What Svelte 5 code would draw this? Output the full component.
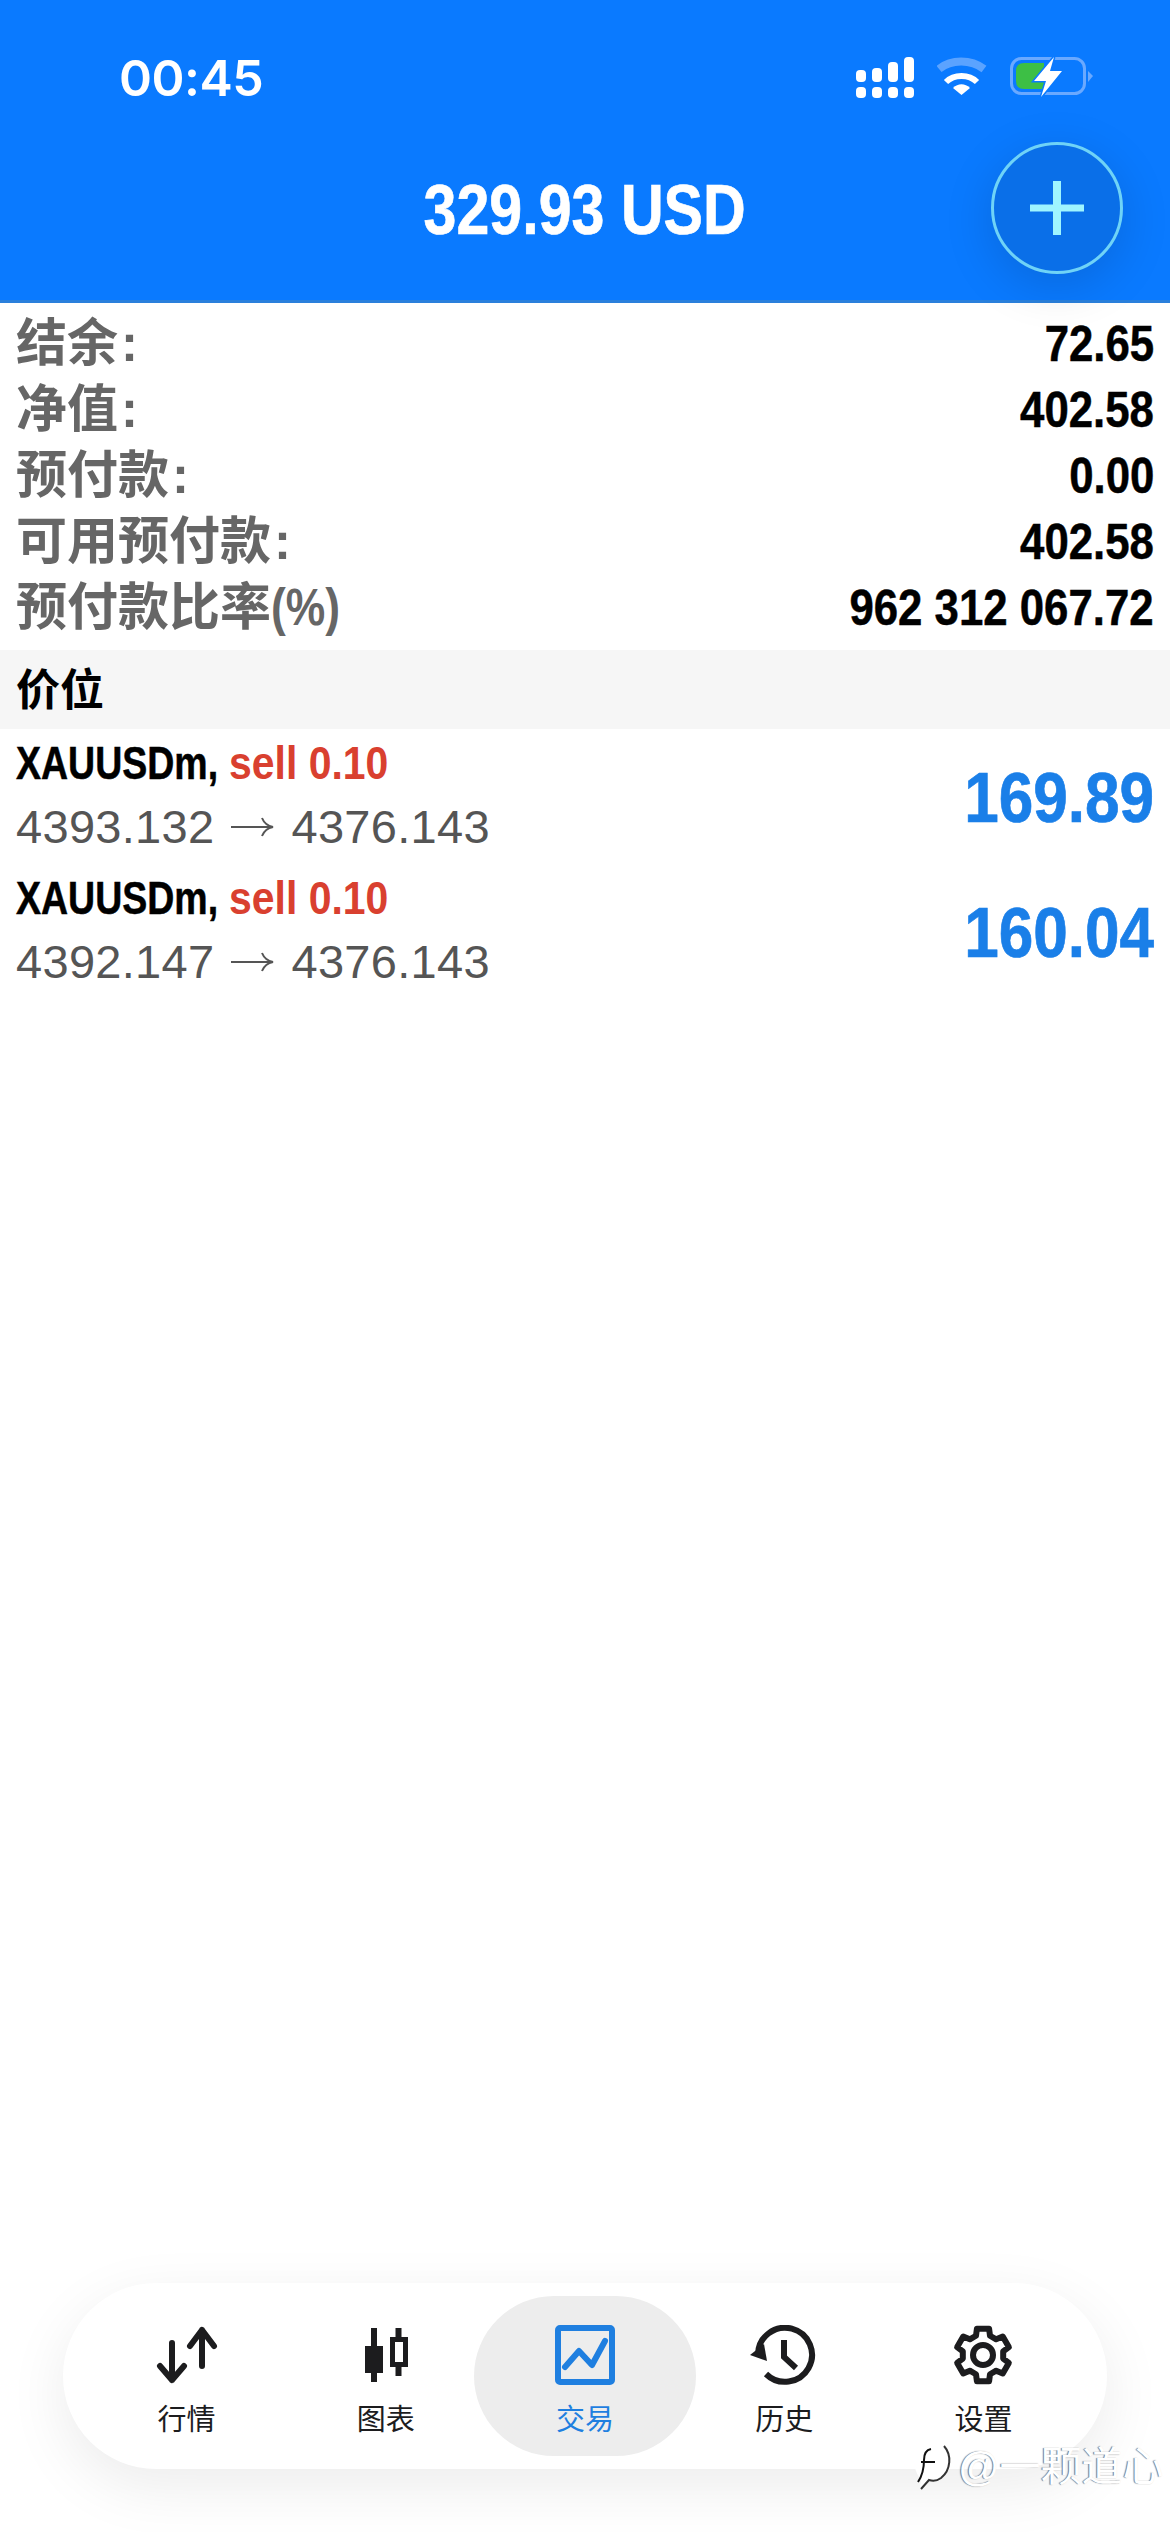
<script>
  const summary = [
    { label: '结余', value: '72.65', colon: true },
    { label: '净值', value: '402.58', colon: true },
    { label: '预付款', value: '0.00', colon: true },
    { label: '可用预付款', value: '402.58', colon: true },
    { label: '预付款比率', unit: '(%)', value: '962 312 067.72' }
  ];

  const positions = [
    { symbol: 'XAUUSDm,', side: 'sell 0.10', open: '4393.132', close: '4376.143', profit: '169.89' },
    { symbol: 'XAUUSDm,', side: 'sell 0.10', open: '4392.147', close: '4376.143', profit: '160.04' }
  ];

  const tabs = [
    { id: 'quotes', label: '行情' },
    { id: 'charts', label: '图表' },
    { id: 'trade', label: '交易', active: true },
    { id: 'history', label: '历史' },
    { id: 'settings', label: '设置' }
  ];

  // six tooth gear outline, centred on 30,30
  function gearPath() {
    const pts = [];
    const at = (deg, r) => {
      const a = (deg * Math.PI) / 180;
      return `${(30 + r * Math.cos(a)).toFixed(2)} ${(30 + r * Math.sin(a)).toFixed(2)}`;
    };
    for (let i = 0; i < 6; i++) {
      const a = i * 60 - 90;
      pts.push(at(a - 20, 20.5), at(a - 13, 27), at(a + 13, 27), at(a + 20, 20.5));
    }
    return 'M' + pts.join('L') + 'Z';
  }
  const gear = gearPath();
</script>

<div class="page">
  <header class="top">
    <div class="status">
      <span class="time">00:45</span>
      <div class="status-icons">
        <svg class="signal" width="58" height="42" viewBox="0 0 58 42" fill="#fff">
          <rect x="0" y="13" width="10" height="12" rx="4" />
          <rect x="16" y="11" width="10" height="14" rx="4" />
          <rect x="32" y="5" width="10" height="20" rx="4" />
          <rect x="48" y="0" width="10" height="25" rx="4" />
          <rect x="0" y="30" width="10" height="11" rx="4" />
          <rect x="16" y="30" width="10" height="11" rx="4" />
          <rect x="32" y="30" width="10" height="11" rx="4" />
          <rect x="48" y="30" width="10" height="11" rx="4" />
        </svg>
        <svg class="wifi" width="50" height="38" viewBox="0 0 50 38" fill="none">
          <path d="M2 12C14 2 34 2 47 12" stroke="#5ba3ff" stroke-width="8" />
          <path d="M9 25C17 17 32 17 40 25" stroke="#fff" stroke-width="6" />
          <path d="M16 31L24.500 38L33 31C28 26 21 26 16 31Z" fill="#fff" />
        </svg>
        <svg class="battery" width="84" height="40" viewBox="0 0 84 40">
          <rect x="1.500" y="1.500" width="73" height="35" rx="10" fill="none" stroke="#6aa9ff" stroke-width="3" />
          <path d="M6 14Q6 6 14 6H34V32H14Q6 32 6 24Z" fill="#3dbf45" />
          <path d="M44 0L24 24H36L31 40L52 14H40Z" fill="#fff" stroke="#0a7aff" stroke-width="3" paint-order="stroke" />
          <path d="M78 14L83 19L78 25Z" fill="#6aa9ff" />
        </svg>
      </div>
    </div>
    <h1 class="balance"><span>329.93 USD</span></h1>
    <button class="add" aria-label="新建订单">
      <svg width="54" height="54" viewBox="0 0 54 54" fill="#9ff5ff">
        <rect x="23" y="0" width="8" height="54" />
        <rect x="0" y="23.500" width="54" height="7" />
      </svg>
    </button>
  </header>

  <section class="summary">
    {#each summary as row}
      <div class="summary-row">
        <span class="label">{row.label}{#if row.colon}<i class="colon">:</i>{/if}{#if row.unit}<i class="unit">{row.unit}</i>{/if}</span>
        <span class="value narrow-r">{row.value}</span>
      </div>
    {/each}
  </section>

  <div class="section-bar">价位</div>

  <section class="positions">
    {#each positions as p}
      <div class="position">
        <div class="position-info">
          <div class="line-top">
            <span class="symbol">{p.symbol}</span>
            <span class="side">{p.side}</span>
          </div>
          <div class="line-price">
            <span>{p.open}</span>
            <svg width="43" height="24" viewBox="0 0 43 24" fill="none" stroke="#555" stroke-width="2">
              <path d="M0 12H41M31 3C33 8 37 11 42 12C37 13 33 16 31 21" />
            </svg>
            <span>{p.close}</span>
          </div>
        </div>
        <span class="profit narrow-r">{p.profit}</span>
      </div>
    {/each}
  </section>

  <div class="nav-wrap">
    <nav class="nav">
      {#each tabs as tab}
        <div class="tab" class:active={tab.active}>
          {#if tab.id === 'quotes'}
            <svg width="72" height="60" viewBox="0 0 72 60" fill="none" stroke="#1c1c1e" stroke-width="6" stroke-linecap="round" stroke-linejoin="round">
              <path d="M21 18V55M9 41L21 55L33 41" />
              <path d="M51 5V41M39 21L51 5L63 21" />
            </svg>
          {:else if tab.id === 'charts'}
            <svg width="60" height="60" viewBox="0 0 60 60" fill="#1c1c1e">
              <rect x="15" y="3" width="6" height="54" />
              <rect x="9" y="21" width="18" height="27" />
              <rect x="39.500" y="3" width="6" height="48" />
              <rect x="36.500" y="14.500" width="13" height="25" fill="#fff" stroke="#1c1c1e" stroke-width="5" />
            </svg>
          {:else if tab.id === 'trade'}
            <svg width="60" height="60" viewBox="0 0 60 60" fill="none" stroke="#1f7fe0" stroke-width="6" stroke-linecap="round" stroke-linejoin="round">
              <rect x="3" y="3" width="54" height="54" rx="2" />
              <path d="M10 42L24 26L37 40L50 16" />
            </svg>
          {:else if tab.id === 'history'}
            <svg width="72" height="60" viewBox="0 0 72 60" fill="none" stroke="#1c1c1e" stroke-width="6">
              <path d="M10 30A27 27 0 1 1 18 49" />
              <path d="M2 30L16 19L19 36Z" fill="#1c1c1e" stroke="none" />
              <path d="M36 15V32L48 43" />
            </svg>
          {:else}
            <svg width="60" height="60" viewBox="0 0 60 60" fill="none" stroke="#1c1c1e" stroke-width="6" stroke-linejoin="round">
              <path d={gear} />
              <circle cx="30" cy="30" r="10" />
            </svg>
          {/if}
          <span class="tab-label">{tab.label}</span>
        </div>
      {/each}
    </nav>
  </div>

  <div class="watermark">
    <svg width="44" height="50" viewBox="0 0 44 50" fill="#fff">
      <path d="M6 26C2 10 16 1 28 2C40 3 44 14 40 26C37 36 28 39 20 38L11 47L12 37C9 34 7 30 6 26Z" />
      <path d="M12 20H26M22 7C17 8 15 12 15 18C15 26 13 34 9 40" fill="none" stroke="#111" stroke-width="2" />
      <path d="M35 4C43 13 42 28 32 36C28 39 23 39 20 38L12 47" fill="none" stroke="#333" stroke-width="2" />
    </svg>
    <span>@一颗道心</span>
  </div>
</div>

<style>
  :global(body) {
    margin: 0;
    background: #fff;
  }

  .page {
    position: relative;
    display: flex;
    flex-direction: column;
    width: 1170px;
    height: 2532px;
    overflow: hidden;
    background: #fff;
    font-family: "Liberation Sans", "Noto Sans CJK SC", sans-serif;
  }

  .top {
    position: relative;
    height: 300px;
    flex: none;
    background: #0a7aff;
    border-bottom: 3px solid #2a80dc;
    color: #fff;
  }

  .status {
    display: flex;
    align-items: center;
    justify-content: space-between;
    padding: 55px 76px 0 119px;
  }

  .time {
    font-family: Inter, sans-serif;
    font-size: 50px;
    font-weight: 600;
    letter-spacing: -0.5px;
    line-height: 46px;
  }

  .status-icons {
    display: flex;
    align-items: flex-start;
    gap: 23px;
  }

  .balance {
    margin: 69px 0 0;
    text-align: center;
    font-size: 70px;
    font-weight: 700;
    line-height: 80px;
    -webkit-text-stroke: 0.7px #fff;
  }

  .balance span {
    display: inline-block;
    transform: scaleX(0.845);
  }

  .add {
    position: absolute;
    left: 991px;
    top: 142px;
    display: flex;
    align-items: center;
    justify-content: center;
    width: 132px;
    height: 132px;
    padding: 0;
    box-sizing: border-box;
    border: 3px solid #6fd3f7;
    border-radius: 50%;
    background: #0a6fe8;
    box-shadow: 0 12px 50px rgba(0, 0, 0, 0.14);
  }

  .summary {
    padding: 8px 16px 9px;
  }

  .summary-row {
    display: flex;
    align-items: center;
    justify-content: space-between;
    height: 66px;
  }

  .label {
    color: #666;
    font-size: 51px;
    font-weight: 700;
    line-height: 66px;
  }

  .colon {
    margin-left: 3px;
    font-style: normal;
  }

  .unit {
    display: inline-block;
    font-style: normal;
    transform: scaleX(0.87);
    transform-origin: left center;
  }

  .value {
    color: #000;
    font-size: 50px;
    font-weight: 700;
    line-height: 66px;
    -webkit-text-stroke: 0.5px #000;
  }

  .narrow-r {
    display: inline-block;
    white-space: nowrap;
    transform: scaleX(0.875);
    transform-origin: right center;
  }

  .section-bar {
    height: 79px;
    flex: none;
    padding-left: 16px;
    background: #f6f6f6;
    color: #000;
    font-size: 44px;
    font-weight: 700;
    line-height: 81px;
  }

  .position {
    display: flex;
    align-items: center;
    justify-content: space-between;
    height: 135px;
    padding: 0 16px;
  }

  .position-info {
    margin-top: -4px;
  }

  .line-top {
    display: flex;
    height: 64px;
    align-items: center;
    font-size: 46px;
    font-weight: 700;
    white-space: nowrap;
  }

  .symbol {
    display: inline-block;
    width: 213px;
    color: #000;
    -webkit-text-stroke: 0.5px #000;
    transform: scaleX(0.815);
    transform-origin: left center;
  }

  .side {
    display: inline-block;
    color: #d9402f;
    transform: scaleX(0.89);
    transform-origin: left center;
  }

  .line-price {
    display: flex;
    align-items: center;
    gap: 17px;
    height: 64px;
    color: #555;
    font-size: 47px;
    letter-spacing: 0.3px;
    line-height: 64px;
    white-space: nowrap;
  }

  .profit {
    margin-top: 2px;
    color: #1a7fe8;
    font-size: 71px;
    font-weight: 700;
    -webkit-text-stroke: 0.7px #1a7fe8;
  }

  .nav-wrap {
    margin-top: auto;
    padding: 0 63px 63px;
  }

  .nav {
    display: grid;
    grid-template-columns: repeat(5, 1fr);
    height: 186px;
    padding: 0 24px;
    border-radius: 93px;
    background: #fff;
    box-shadow: 0 18px 60px rgba(0, 0, 0, 0.08);
  }

  .tab {
    position: relative;
    display: flex;
    flex-direction: column;
    align-items: center;
    padding-top: 42px;
    color: #1c1c1e;
  }

  .tab > * {
    position: relative;
  }

  .tab.active {
    color: #1f7fe0;
  }

  .tab.active::before {
    content: '';
    position: absolute;
    left: -11px;
    right: -11px;
    top: 13px;
    height: 160px;
    border-radius: 80px;
    background: #ededed;
  }

  .tab-label {
    margin-top: 18px;
    font-size: 29px;
    line-height: 34px;
    font-weight: 400;
  }

  .watermark {
    position: absolute;
    left: 909px;
    top: 2442px;
    display: flex;
    align-items: center;
    gap: 5px;
    color: #fff;
    font-size: 41px;
    line-height: 50px;
    text-shadow: -1px 0 1px rgba(0, 0, 0, 0.55);
    white-space: nowrap;
  }
</style>
